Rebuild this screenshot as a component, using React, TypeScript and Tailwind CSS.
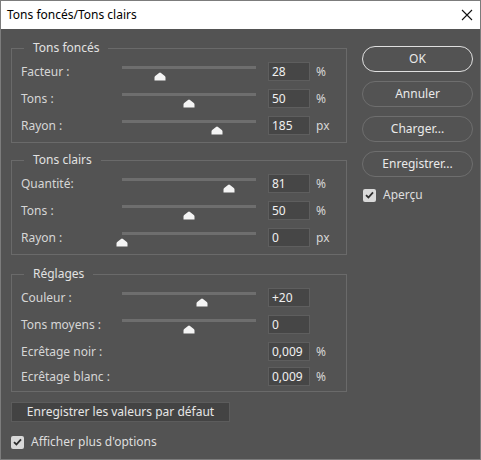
import React from "react";

type Row = {
  label: string;
  value: string;
  unit?: string;
  pos?: number; // 0..1, slider thumb position
};

const GROUPS: { title: string; rows: Row[] }[] = [
  {
    title: "Tons foncés",
    rows: [
      { label: "Facteur :", value: "28", unit: "%", pos: 0.28 },
      { label: "Tons :", value: "50", unit: "%", pos: 0.5 },
      { label: "Rayon :", value: "185", unit: "px", pos: 0.71 },
    ],
  },
  {
    title: "Tons clairs",
    rows: [
      { label: "Quantité:", value: "81", unit: "%", pos: 0.8 },
      { label: "Tons :", value: "50", unit: "%", pos: 0.5 },
      { label: "Rayon :", value: "0", unit: "px", pos: 0 },
    ],
  },
  {
    title: "Réglages",
    rows: [
      { label: "Couleur :", value: "+20", pos: 0.6 },
      { label: "Tons moyens :", value: "0", pos: 0.5 },
      { label: "Ecrêtage noir :", value: "0,009", unit: "%" },
      { label: "Ecrêtage blanc :", value: "0,009", unit: "%" },
    ],
  },
];

function Thumb() {
  return (
    <svg width="12" height="9" viewBox="0 0 12 9" className="block">
      <path d="M0.5 8.5 L0.5 5.5 Q0.5 4.5 1.5 3.8 L5 0.9 Q6 0.2 7 0.9 L10.5 3.8 Q11.5 4.5 11.5 5.5 L11.5 8.5 Z" fill="#f4f4f4" />
    </svg>
  );
}

function Slider({ pos }: { pos: number }) {
  return (
    <div className="relative w-[134px] h-[19px]">
      <div className="absolute left-0 right-0 top-[4px] h-[3px] bg-[#6e6e6e]" />
      <div className="absolute top-[10px]" style={{ left: Math.round(pos * 134) - 6 }}>
        <Thumb />
      </div>
    </div>
  );
}

function Check() {
  return (
    <div className="w-[13px] h-[13px] rounded-[2px] bg-[#d9d9d9] flex items-center justify-center">
      <svg width="9" height="8" viewBox="0 0 9 8">
        <path d="M1 4.2 L3.4 6.5 L8 1.3" fill="none" stroke="#2e2e2e" strokeWidth="1.8" />
      </svg>
    </div>
  );
}

function Group({ title, rows, tight }: { title: string; rows: Row[]; tight?: boolean }) {
  return (
    <fieldset className="border border-[#6a6a6a] w-[336px] pb-[3px]">
      <legend className="ml-[12px] px-[9px] h-[16px] leading-[16px] text-[12px] text-[#e2e2e2]">{title}</legend>
      <div className="flex flex-col pt-[2px]">
        {rows.map((r, i) => (
          <div
            key={i}
            className={`flex items-center ${tight && i === rows.length - 1 ? "h-[23px]" : "h-[27px]"}`}
          >
            <span className="w-[110px] pl-[9px] text-[12px] text-[#d6d6d6] whitespace-nowrap">{r.label}</span>
            <div className="w-[146px]">{r.pos !== undefined && <Slider pos={r.pos} />}</div>
            <div className="w-[42px] h-[19px] bg-[#464646] border border-[#5e5e5e] pl-[3px] text-[12px] leading-[17px] text-[#f0f0f0]">
              {r.value}
            </div>
            <span className="pl-[6px] text-[12px] text-[#d6d6d6]">{r.unit}</span>
          </div>
        ))}
      </div>
    </fieldset>
  );
}

function RoundButton({ label, primary }: { label: string; primary?: boolean }) {
  return (
    <button
      className={`w-[111px] h-[26px] rounded-full border text-[12px] text-[#eaeaea] ${
        primary ? "border-[#e0e0e0]" : "border-[#6e6e6e]"
      }`}
    >
      {label}
    </button>
  );
}

export default function App() {
  return (
    <div
      className="w-[481px] h-[460px] bg-[#535353] border border-[#7c7c7c] flex flex-col overflow-hidden"
      style={{ fontFamily: '"Noto Sans", "Liberation Sans", sans-serif' }}
    >
      {/* barre de titre */}
      <div className="h-[28px] bg-white flex items-center justify-between pl-[6px] pr-[6px] shrink-0">
        <span className="text-[12px] text-black">Tons foncés/Tons clairs</span>
        <svg width="12" height="12" viewBox="0 0 12 12" className="mr-[1px]">
          <path d="M1 1 L11 11 M11 1 L1 11" stroke="#111" strokeWidth="1.1" />
        </svg>
      </div>

      <div className="flex flex-1">
        {/* colonne gauche */}
        <div className="flex flex-col pl-[10px] pt-[11px]">
          <Group title={GROUPS[0].title} rows={GROUPS[0].rows} />
          <div className="h-[9px]" />
          <Group title={GROUPS[1].title} rows={GROUPS[1].rows} />
          <div className="h-[11px]" />
          <Group title={GROUPS[2].title} rows={GROUPS[2].rows} tight />

          <button className="mt-[10px] w-[219px] h-[20px] bg-[#434343] border border-[#5c5c5c] text-[12px] leading-[18px] text-[#e6e6e6]">
            Enregistrer les valeurs par défaut
          </button>
          <div className="flex items-center gap-[7px] mt-[11px] pl-[0px]">
            <Check />
            <span className="text-[12px] text-[#dedede]">Afficher plus d'options</span>
          </div>
        </div>

        {/* colonne droite */}
        <div className="flex flex-col pl-[15px] pt-[17px] gap-[9px]">
          <RoundButton label="OK" primary />
          <RoundButton label="Annuler" />
          <RoundButton label="Charger..." />
          <RoundButton label="Enregistrer..." />
          <div className="flex items-center gap-[7px] mt-0 pl-[1px]">
            <Check />
            <span className="text-[12px] text-[#dedede]">Aperçu</span>
          </div>
        </div>
      </div>
    </div>
  );
}
